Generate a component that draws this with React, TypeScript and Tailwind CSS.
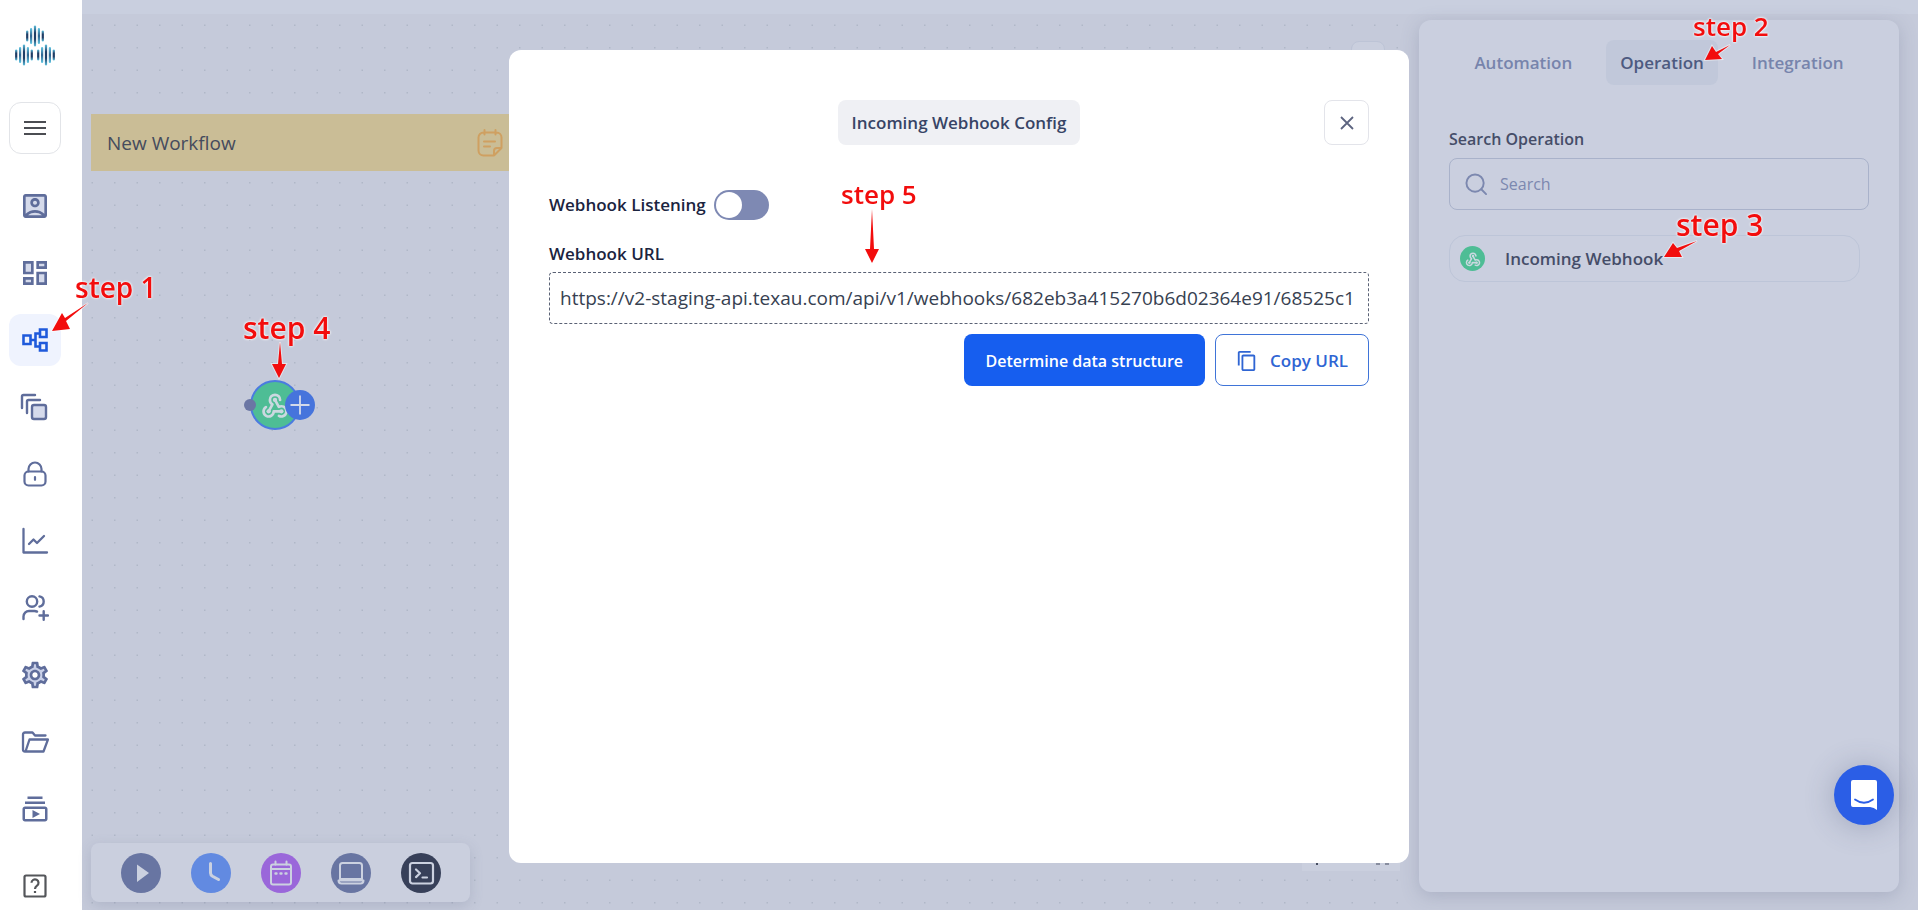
import React from 'react';
import {
  MdOutlineAccountBox,
  MdOutlineDashboard,
  MdOutlineSettings,
  MdSettings,
  MdOutlineSubscriptions,
  MdContentCopy,
} from 'react-icons/md';

const line = {
  fill: 'none',
  stroke: 'currentColor',
  strokeWidth: 1.8,
  strokeLinecap: 'round' as const,
  strokeLinejoin: 'round' as const,
};

function Logo() {
  const heights = [11, 16, 21, 16, 11];
  const cluster = (cx: number, cy: number) =>
    heights.map((h, i) => (
      <rect
        key={`${cx}-${i}`}
        x={cx + (i - 2) * 3.9 - 1.1}
        y={cy - h / 2}
        width="2.2"
        height={h}
        rx="1.1"
        fill={i % 2 ? 'url(#bar-light)' : 'url(#bar-dark)'}
      />
    ));
  return (
    <svg viewBox="0 0 42 42" className="size-[42px]" role="img" aria-label="TexAu">
      <defs>
        <linearGradient id="bar-dark" x1="0" y1="0" x2="0" y2="1">
          <stop offset="0" stopColor="#5cc0de" />
          <stop offset="0.35" stopColor="#1f3d66" />
          <stop offset="0.65" stopColor="#1f3d66" />
          <stop offset="1" stopColor="#5cc0de" />
        </linearGradient>
        <linearGradient id="bar-light" x1="0" y1="0" x2="0" y2="1">
          <stop offset="0" stopColor="#63c6e2" />
          <stop offset="0.5" stopColor="#2f6390" />
          <stop offset="1" stopColor="#63c6e2" />
        </linearGradient>
      </defs>
      {cluster(21, 12)}
      {cluster(10, 31)}
      {cluster(32, 31)}
    </svg>
  );
}

function WebhookIcon({ className }: { className: string }) {
  return (
    <svg viewBox="1 1 22 22" className={className} {...line} strokeWidth={2.1}>
      <path d="M4.876 13.610a4 4 0 1 0 6.124 3.390h6" />
      <path d="M15.066 20.502a4 4 0 1 0 1.934-7.502c-.706 0-1.424.179-2 .5l-3-5.500" />
      <path d="M16 8a4 4 0 1 0-8 0c0 1.506.77 2.818 2 3.500l-3 5.500" />
      <g fill="currentColor" stroke="none">
        <circle cx="12" cy="8" r="1.700" />
        <circle cx="7" cy="17" r="1.700" />
        <circle cx="17" cy="17" r="1.700" />
      </g>
    </svg>
  );
}

function ProfileIcon() {
  return (
    <span className="grid size-8 place-items-center">
      <span className="col-start-1 row-start-1 size-[22px] rounded-sm bg-[#d5daeb]" />
      <MdOutlineAccountBox className="col-start-1 row-start-1 size-8" />
    </span>
  );
}

function DashboardIcon() {
  return (
    <span className="grid size-8 place-items-center">
      <svg viewBox="0 0 24 24" className="col-start-1 row-start-1 size-8" fill="#d5daeb">
        <path d="M4 4h6v8H4zM14 4h6v4h-6zM14 12h6v8h-6zM4 16h6v4H4z" />
      </svg>
      <MdOutlineDashboard className="col-start-1 row-start-1 size-8" />
    </span>
  );
}

function FlowIcon() {
  return (
    <svg viewBox="0 0 28 28" className="size-7" fill="none" stroke="currentColor" strokeWidth="2.6">
      <path d="M2.500 9.500h7v8.500h-7zM19 3.500h6.500v7.500H19zM19 17h6.500v7.500H19zM9.500 14h5M19 7.500h-4.500v13H19" />
    </svg>
  );
}

function StackIcon() {
  return (
    <svg viewBox="0 0 30 28" className="h-7 w-[30px]" {...line} strokeWidth={2.4}>
      <rect x="12" y="12" width="14" height="14" rx="2" fill="#d5daeb" />
      <path d="M7 20V8.500Q7 7 8.500 7H20M2 15V3.500Q2 2 3.500 2H15" />
    </svg>
  );
}

function LockIcon() {
  return (
    <svg viewBox="0 0 24 26" className="h-[26px] w-6" {...line} strokeWidth={2.2}>
      <rect x="1.500" y="10.500" width="21" height="14" rx="4" />
      <path d="M5.500 10.500V8a6.500 6.500 0 0 1 13 0v2.500M12 16.200v2.600" />
    </svg>
  );
}

function ChartIcon() {
  return (
    <svg viewBox="0 0 28 28" className="size-7" {...line} strokeWidth={2.3}>
      <path d="M2.500 2v23.500H26M8 17l4.500-4.500 3.500 3.500 7-7" />
    </svg>
  );
}

function TeamIcon() {
  return (
    <svg viewBox="0 0 28 28" className="size-7" {...line} strokeWidth={2.4}>
      <circle cx="11" cy="7.500" r="5.200" />
      <path d="M2.500 25v-2.500a5.500 5.500 0 0 1 5.500-5.500h5.500q1.500 0 2.500.6M18.500 2.400a5.200 5.200 0 0 1 0 10.200M18.500 21.500h8.500M22.700 17.300v8.500" />
    </svg>
  );
}

function GearIcon() {
  return (
    <span className="grid size-8 place-items-center">
      <MdSettings className="col-start-1 row-start-1 size-8 text-[#c9d0e8]" />
      <MdOutlineSettings className="col-start-1 row-start-1 size-8" />
    </span>
  );
}

function FolderIcon() {
  return (
    <svg viewBox="0 0 28 24" className="h-6 w-7" {...line} strokeWidth={2.3}>
      <path d="M24.500 5.500H14L11.500 2.500H4Q2 2.500 2 4.500V19.500Q2 21.500 4 21.500H22.500L27 9.500H8.500L4.500 21.500" />
    </svg>
  );
}

function HelpIcon() {
  return (
    <svg viewBox="0 0 24 24" className="size-6" fill="none" stroke="#54565a" strokeWidth="2.2">
      <rect x="1.500" y="1.500" width="21" height="21" rx="1.500" />
      <path d="M8.500 8.800a3.500 3.500 0 1 1 5.500 2.900q-2 1.400-2 3.300M12 17v2" />
    </svg>
  );
}

const navItems = [
  { label: 'Profiles', icon: <ProfileIcon /> },
  { label: 'Dashboard', icon: <DashboardIcon /> },
  { label: 'Workflows', icon: <FlowIcon />, active: true },
  { label: 'Templates', icon: <StackIcon /> },
  { label: 'Vault', icon: <LockIcon /> },
  { label: 'Analytics', icon: <ChartIcon /> },
  { label: 'Team', icon: <TeamIcon /> },
  { label: 'Settings', icon: <GearIcon /> },
  { label: 'Files', icon: <FolderIcon /> },
  { label: 'Tutorials', icon: <MdOutlineSubscriptions className="size-[30px]" /> },
];

function Sidebar() {
  return (
    <aside className="flex w-[82px] shrink-0 flex-col bg-white pl-[9px]">
      <a href="#home" className="flex h-[102px] w-[52px] items-center justify-center pb-3">
        <Logo />
      </a>
      <button
        aria-label="Toggle menu"
        className="flex size-[52px] items-center justify-center rounded-xl border border-[#e2e4e8]"
      >
        <svg viewBox="0 0 22 16" className="h-4 w-[22px]" stroke="#4b4d52" strokeWidth="2.2">
          <path d="M0 2h22M0 8h22M0 14h22" />
        </svg>
      </button>
      <nav className="mt-[26px] flex flex-col gap-[15px] text-[#5f6d9b]">
        {navItems.map((item) => (
          <a
            key={item.label}
            href={`#${item.label.toLowerCase()}`}
            aria-label={item.label}
            className={
              item.active
                ? 'flex size-[52px] items-center justify-center rounded-xl bg-[#eff3fe] text-[#1f5adb]'
                : 'flex size-[52px] items-center justify-center rounded-xl'
            }
          >
            {item.icon}
          </a>
        ))}
      </nav>
      <a href="#help" aria-label="Help" className="mt-auto flex h-12 w-[52px] items-center justify-center">
        <HelpIcon />
      </a>
    </aside>
  );
}

function CanvasDots() {
  return (
    <svg className="absolute inset-0 size-full" aria-hidden="true">
      <defs>
        <pattern id="dots" width="45" height="45" patternUnits="userSpaceOnUse" x="-1" y="0">
          <g fill="#b0b7c7">
            <rect x="10.500" y="10.500" width="1.500" height="1.500" />
            <rect x="33" y="10.500" width="1.500" height="1.500" />
            <rect x="10.500" y="33" width="1.500" height="1.500" />
            <rect x="33" y="33" width="1.500" height="1.500" />
          </g>
        </pattern>
      </defs>
      <rect width="100%" height="100%" fill="url(#dots)" />
    </svg>
  );
}

function NoteIcon() {
  return (
    <svg viewBox="0 0 26 28" className="h-7 w-[26px] text-[#cfa061]" {...line} strokeWidth={2}>
      <path d="M24.500 19V8.500a5 5 0 0 0-5-5h-13a5 5 0 0 0-5 5v13a5 5 0 0 0 5 5H17l7.500-7.500H20a3 3 0 0 0-3 3v4.500M7.500 1v4.500M18.500 1v4.500M7 12.500h11M7 17.500h6" />
    </svg>
  );
}

const tools = [
  {
    label: 'Run',
    className: 'size-10 rounded-full bg-[#6875a2]',
    icon: <path d="M16 11.500v17.500L28 20z" fill="#cbd1e0" />,
  },
  {
    label: 'Delay',
    className: 'size-10 rounded-full bg-[#628ae1]',
    icon: <path d="M19.500 10.500V20q0 2 2 3.200l6 3.300" {...line} stroke="#cbd1e0" strokeWidth={3} />,
  },
  {
    label: 'Schedule',
    className: 'size-10 rounded-full bg-[#9a67da]',
    icon: (
      <g {...line} stroke="#cbd1e0" strokeWidth={2}>
        <rect x="10" y="11.500" width="20" height="20" rx="2" />
        <path d="M10 16h20M14.500 8.500v3M25.500 8.500v3" />
        <path d="M14.500 20.500h1M19.500 20.500h1M24.500 20.500h1" strokeWidth={2.4} />
      </g>
    ),
  },
  {
    label: 'Device',
    className: 'size-10 rounded-full bg-[#6875a2]',
    icon: (
      <g {...line} stroke="#cbd1e0" strokeWidth={2}>
        <path d="M9 26V12.500Q9 10 11.500 10h17q2.500 0 2.500 2.500V26zM7.500 27.500q0 3 3 3h19q3 0 3-3z" />
      </g>
    ),
  },
  {
    label: 'Script',
    className: 'size-10 rounded-full bg-[#374059]',
    icon: (
      <g {...line} stroke="#cbd1e0" strokeWidth={2.2}>
        <rect x="9" y="10" width="23" height="20.500" rx="2.500" />
        <path d="M15 16.500l4 3.800-4 3.800M21.500 24.500h4.500" />
      </g>
    ),
  },
];

function Workspace() {
  return (
    <section className="relative flex flex-1 flex-col justify-between pt-[100px] pb-2 pl-[9px]">
      <CanvasDots />
      <div className="relative flex h-[57px] w-[424px] items-center justify-between bg-[#cabd96] pr-3 pl-4">
        <h1 className="pt-0.5 text-[19px] text-[#454b5d]">New Workflow</h1>
        <button aria-label="Notes">
          <NoteIcon />
        </button>
      </div>

      <div className="absolute top-[366px] left-[162px] flex items-center">
        <span className="z-10 size-3 rounded-full bg-[#6b76a4]" />
        <span className="-ml-1.5 flex size-[50px] items-center justify-center rounded-full border-2 border-[#4b7be0] bg-[#4ebd95]">
          <WebhookIcon className="size-7 text-[#cbd8e0]" />
        </span>
        <button aria-label="Add step" className="-ml-[15px] size-[30px] rounded-full bg-[#4674dc]">
          <svg viewBox="0 0 30 30" className="size-[30px]" stroke="#d3daea" strokeWidth="1.800">
            <path d="M5.500 15h19M15 5.500v19" />
          </svg>
        </button>
      </div>

      <div className="relative flex h-[59px] w-[379px] items-center gap-[30px] rounded-lg bg-[#cacfde] px-[30px] shadow-[0_4px_14px_rgba(90,100,130,0.2)]">
        {tools.map((tool) => (
          <button key={tool.label} aria-label={tool.label} className={tool.className}>
            <svg viewBox="0 0 40 40" className="size-10">
              {tool.icon}
            </svg>
          </button>
        ))}
      </div>

      <div className="absolute top-[27px] right-[34px] size-[34px] rounded-lg border border-[#bdc4d6] bg-[#cacfde]" />
      <div className="absolute right-[19px] bottom-[39px] flex h-6 w-[98px] items-end bg-[#cacfde]">
        <svg viewBox="0 0 98 24" className="h-6 w-[98px]" fill="#454c60" aria-hidden="true">
          <path d="M14 15h2v3h-2zM74 16.500h4v1h-4zM83 16.500h4v1h-4z" />
        </svg>
      </div>
    </section>
  );
}

function OperationPanel() {
  return (
    <section className="relative mt-1.5 mr-[19px] mb-[18px] w-[480px] shrink-0 rounded-xl bg-[#cacfdf] px-[30px] pt-5 shadow-[0_4px_18px_rgba(90,100,130,0.25)]">
      <div role="tablist" className="flex justify-center gap-5 text-[17px] font-semibold text-[#7784ac]">
        <button role="tab" aria-selected="false" className="h-[45px] rounded-lg px-3.5">
          Automation
        </button>
        <button role="tab" aria-selected="true" className="h-[45px] rounded-lg bg-[#c1c8da] px-3.5 text-[#4d5a80]">
          Operation
        </button>
        <button role="tab" aria-selected="false" className="h-[45px] rounded-lg px-3.5">
          Integration
        </button>
      </div>
      <label htmlFor="search" className="mt-[42px] block text-base leading-6 font-semibold text-[#454d68]">
        Search Operation
      </label>
      <div className="mt-[7px] flex h-[52px] items-center gap-3 rounded-lg border border-[#a9b2ca] px-[15px]">
        <svg viewBox="0 0 24 24" className="size-[23px] shrink-0 text-[#7c88af]" {...line} strokeWidth={2}>
          <circle cx="10.500" cy="10.500" r="9" />
          <path d="M17 17l5 5" />
        </svg>
        <input
          id="search"
          placeholder="Search"
          className="w-full bg-transparent text-base outline-none placeholder:text-[#7c88af]"
        />
      </div>
      <button className="mt-[25px] flex h-[47px] w-[411px] items-center gap-5 rounded-2xl border border-[#bdc5d8] px-2.5 text-[17px] font-semibold text-[#454d68]">
        <span className="flex size-[25px] items-center justify-center rounded-full bg-[#4ebd95]">
          <WebhookIcon className="size-4 text-[#cbd8e0]" />
        </span>
        Incoming Webhook
      </button>
    </section>
  );
}

function WebhookDialog() {
  return (
    <div className="pointer-events-none fixed inset-0 flex justify-center pt-[50px] pb-[47px]">
      <div
        role="dialog"
        aria-label="Incoming Webhook Config"
        className="pointer-events-auto flex w-[900px] flex-col rounded-xl bg-white px-10 pt-[50px]"
      >
        <div className="grid grid-cols-[1fr_auto_1fr] items-center">
          <h2 className="col-start-2 flex h-[45px] items-center rounded-lg bg-[#eff0f4] px-3.5 text-[17px] font-semibold text-[#374466]">
            Incoming Webhook Config
          </h2>
          <button
            aria-label="Close"
            className="flex size-[45px] items-center justify-center justify-self-end rounded-lg border border-[#e3e4ea]"
          >
            <svg viewBox="0 0 14 14" className="size-3.5" stroke="#5d6480" strokeWidth="1.800">
              <path d="M1 1l12 12M13 1L1 13" />
            </svg>
          </button>
        </div>
        <div className="mt-[45px] flex h-[30px] items-center gap-2">
          <label htmlFor="listening" className="text-[17px] font-semibold text-[#1b2440]">
            Webhook Listening
          </label>
          <input
            id="listening"
            type="checkbox"
            role="switch"
            className="h-[30px] w-[55px] appearance-none rounded-full bg-[#7e89b3] p-0.5 before:block before:size-[26px] before:rounded-full before:bg-white checked:before:ml-auto"
          />
        </div>
        <label htmlFor="url" className="mt-[22px] block text-[17px] leading-6 font-semibold text-[#1b2440]">
          Webhook URL
        </label>
        <input
          id="url"
          readOnly
          value="https://v2-staging-api.texau.com/api/v1/webhooks/682eb3a415270b6d02364e91/68525c1"
          className="mt-1.5 h-[52px] rounded border border-dashed border-[#5a6275] px-2.5 text-[19px] text-[#374151] outline-none"
        />
        <div className="mt-2.5 flex justify-end gap-2.5">
          <button className="h-[52px] rounded-lg bg-[#165eef] px-[22px] pt-0.5 text-base font-semibold text-white">
            Determine data structure
          </button>
          <button className="flex h-[52px] items-center gap-3 rounded-lg border border-[#3f74d8] px-5 pt-0.5 text-[17px] font-semibold text-[#2f65d3]">
            <MdContentCopy className="size-[22px]" />
            Copy URL
          </button>
        </div>
      </div>
    </div>
  );
}

function ChatLauncher() {
  return (
    <button
      aria-label="Open chat"
      className="fixed right-6 bottom-[85px] flex size-[60px] items-center justify-center rounded-full bg-[#2b5ee6] shadow-[0_2px_30px_rgba(60,70,110,0.3)]"
    >
      <svg viewBox="0 0 28 32" className="h-8 w-7">
        <path d="M3 1h22q2 0 2 2v28q-3-2.500-7-3H3q-2 0-2-2V3q0-2 2-2z" fill="#fff" />
        <path d="M5 20.500q9 6.500 18 0" fill="none" stroke="#2b5ee6" strokeWidth="1.800" strokeLinecap="round" />
      </svg>
    </button>
  );
}

const notes = [
  { text: 'step 1', className: 'absolute top-[267px] left-[75px] text-[28px] leading-10' },
  { text: 'step 2', className: 'absolute top-[6px] left-[1693px] text-[26px] leading-10' },
  { text: 'step 3', className: 'absolute top-[205px] left-[1676px] text-[30px] leading-10' },
  { text: 'step 4', className: 'absolute top-[308px] left-[243px] text-[30px] leading-10' },
  { text: 'step 5', className: 'absolute top-[174px] left-[841px] text-[26px] leading-10' },
];

const arrows = [
  'M88 303L65 318L62 313L52 331L70 329L66 321Z',
  'M1730 45L1716 52L1712 46L1705 60L1722 59L1718 54Z',
  'M1697 241L1677 248L1673 243L1664 257L1682 257L1679 251Z',
  'M280 342L278 364H272L279 378L286 364H282Z',
  'M872 209L870 249H865L872 263L879 249H874Z',
];

function Annotations() {
  return (
    <div className="pointer-events-none fixed inset-0 font-semibold text-[#f20d0d] [text-shadow:0_0_2px_#fff,0_0_3px_#fff]">
      <svg
        className="absolute inset-0 size-full"
        fill="#f20d0d"
        stroke="#ffffff"
        strokeOpacity="0.5"
        paintOrder="stroke"
        strokeWidth="2"
        aria-hidden="true"
      >
        {arrows.map((d) => (
          <path key={d} d={d} />
        ))}
      </svg>
      {notes.map((note) => (
        <span key={note.text} className={note.className}>
          {note.text}
        </span>
      ))}
    </div>
  );
}

export default function App() {
  return (
    <div className="flex h-screen min-h-[880px] overflow-hidden bg-white font-['Open_Sans','Noto_Sans',sans-serif]">
      <Sidebar />
      <div className="flex flex-1 flex-col bg-[#c5cada]">
        <header className="h-3.5 bg-[#c9cfdf]" />
        <main className="flex flex-1">
          <Workspace />
          <OperationPanel />
        </main>
      </div>
      <WebhookDialog />
      <ChatLauncher />
      <Annotations />
    </div>
  );
}
